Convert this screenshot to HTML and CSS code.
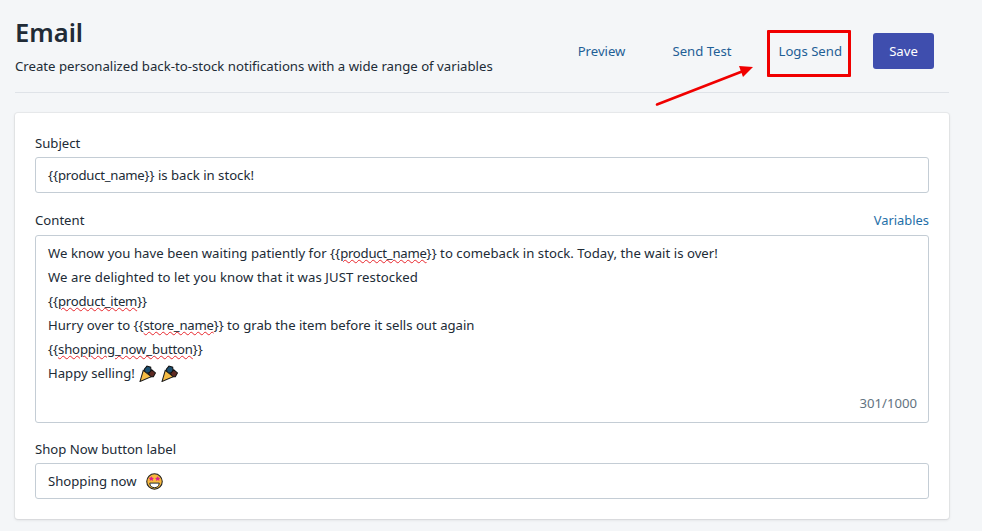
FILE: index.html
```html
<!DOCTYPE html>
<html lang="en">
<head>
<meta charset="utf-8">
<title>Email</title>
<link rel="stylesheet" href="styles.css">
</head>
<body>
<main class="page">
  <header class="head">
    <div class="head-text">
      <h1 class="title">Email</h1>
      <p class="subtitle">Create personalized back-to-stock notifications with a wide range of variables</p>
    </div>
    <nav class="actions">
      <a class="link act-preview">Preview</a>
      <a class="link act-test">Send Test</a>
      <a class="link act-logs">Logs Send</a>
      <button class="save">Save</button>
    </nav>
  </header>

  <section class="card">
    <div class="field">
      <div class="label-row"><span class="label">Subject</span></div>
      <div class="input"><span>{{<span class="tight">product_name</span>}} is back in stock!</span></div>
    </div>
    <div class="field">
      <div class="label-row label-row-content"><span class="label">Content</span><a class="variables">Variables</a></div>
      <div class="textarea">
        <div class="line line-first">We know you have been waiting patiently for {{<span class="sp tight">product_name</span>}} to comeback in stock. Today, the wait is over!</div>
        <div class="line line-wide">We are delighted to let you know that it was JUST restocked</div>
        <div class="line">{{<span class="sp tight">product_item</span>}}</div>
        <div class="line">Hurry over to {{<span class="sp tight">store_name</span>}} to grab the item before it sells out again</div>
        <div class="line">{{<span class="sp tight-less">shopping_now_button</span>}}</div>
        <div class="line">Happy selling!
          <svg class="emoji" viewBox="0 0 16 16"><path d="M5 4 L7.500 1 L11 2 L11.500 7 L6 8 Z" fill="#1c4f70" stroke="#111" stroke-width="1"/><path d="M9 8 L12 4.500 L15.500 7.500 L13.500 11 L10 11 Z" fill="#5e2a22" stroke="#111" stroke-width="1"/><path d="M1 15.500 L4 5 L11.500 11 Z" fill="#f6bd45" stroke="#1c1c1c" stroke-width="1"/></svg>
          <svg class="emoji" viewBox="0 0 16 16"><path d="M5 4 L7.500 1 L11 2 L11.500 7 L6 8 Z" fill="#1c4f70" stroke="#111" stroke-width="1"/><path d="M9 8 L12 4.500 L15.500 7.500 L13.500 11 L10 11 Z" fill="#5e2a22" stroke="#111" stroke-width="1"/><path d="M1 15.500 L4 5 L11.500 11 Z" fill="#f6bd45" stroke="#1c1c1c" stroke-width="1"/></svg>
        </div>
        <div class="counter">301/1000</div>
      </div>
    </div>
    <div class="field">
      <div class="label-row"><span class="label">Shop Now button label</span></div>
      <div class="input"><span>Shopping now</span>
        <svg class="face" viewBox="0 0 16 16"><circle cx="8" cy="8" r="7.300" fill="#f7b93e" stroke="#222" stroke-width="1"/><path d="M3.500 9.500 H12.500 C12.200 12.800 10 13.800 8 13.800 S3.800 12.800 3.500 9.500 Z" fill="#fff" stroke="#222" stroke-width=".9"/><path d="M5 3 l.9 1.500 1.600.2 -1.200 1.200 .3 1.600 -1.600-.8 -1.600.8 .3-1.600 -1.200-1.200 1.600-.2 Z" fill="#e0218a"/><path d="M11 3 l.9 1.500 1.600.2 -1.200 1.200 .3 1.600 -1.600-.8 -1.600.8 .3-1.600 -1.200-1.200 1.600-.2 Z" fill="#e0218a"/></svg>
      </div>
    </div>
  </section>
</main>
<div class="hl-box"></div>
<svg class="arrow" viewBox="0 0 982 531"><line x1="657" y1="104.500" x2="742" y2="71.500" stroke="#f00000" stroke-width="2.600" stroke-linecap="round"/><polygon points="753,67 739,66 743,77" fill="#f00000"/></svg>
</body>
</html>
```

FILE: styles.css
```css
* { box-sizing: border-box; }
html, body { margin: 0; height: 100%; }
body {
  background: #f4f6f8;
  font-family: "Noto Sans", "Open Sans", sans-serif;
  font-size: 13.150px;
  color: #212b36;
  overflow: hidden;
  position: relative;
}
.page { width: 934px; margin-left: 15px; }
.head {
  height: 93px;
  border-bottom: 1px solid #dfe3e8;
  display: flex;
  justify-content: space-between;
  align-items: flex-start;
}
.head-text { padding-top: 14px; }
.title { margin: 0; font-size: 25.500px; line-height: 36px; font-weight: 600; color: #212b36; }
.subtitle { margin: 6px 0 0; line-height: 20px; font-size: 13.200px; color: #212b36; }
.actions { display: flex; align-items: center; height: 36px; margin-top: 33px; margin-right: 15px; }
.link { color: #1f5f96; line-height: 36px; }
.act-preview { margin-right: 47px; }
.act-test { margin-right: 47px; }
.act-logs { margin-right: 31px; }
.save {
  width: 61px; height: 36px;
  background: #3f4eae;
  color: #fff;
  border: 0;
  border-radius: 3px;
  font: inherit;
  padding: 0;
}
.card {
  margin-top: 20px;
  height: 406px;
  background: #fff;
  border-radius: 3px;
  box-shadow: 0 0 0 1px rgba(63,63,68,.05), 0 1px 3px rgba(63,63,68,.15);
  padding: 20px;
}
.field { margin-bottom: 16px; }
.label-row { display: flex; justify-content: space-between; height: 24px; line-height: 20px; }
.label-row-content { height: 26px; padding-top: 1px; }
.variables { color: #1f6fa8; font-size: 12.900px; }
.input {
  height: 36px;
  border: 1px solid #c4cdd5;
  border-radius: 3px;
  padding: 0 12px;
  line-height: 34px;
  display: flex;
  align-items: center;
  gap: 9px;
}
.textarea {
  height: 188px;
  border: 1px solid #c4cdd5;
  border-radius: 3px;
  padding: 5px 12px;
  position: relative;
}
.line { height: 24px; line-height: 24px; white-space: nowrap; }
.line-first { letter-spacing: .035px; }
.line-wide { letter-spacing: .085px; }
.tight { letter-spacing: -.25px; }
.tight-less { letter-spacing: -.15px; }
.sp { text-decoration: underline wavy #e8262c 1px; text-underline-offset: 1px; }
.emoji { width: 17px; height: 17px; margin-left: 1px; vertical-align: -4px; }
.face { width: 17px; height: 17px; }
.counter { position: absolute; right: 11px; bottom: 9px; line-height: 20px; color: #637381; }
.hl-box {
  position: absolute;
  left: 767px; top: 30px;
  width: 84px; height: 47px;
  border: 3px solid #f00000;
  border-radius: 1px;
}
.arrow { position: absolute; left: 0; top: 0; width: 982px; height: 531px; pointer-events: none; }
```
